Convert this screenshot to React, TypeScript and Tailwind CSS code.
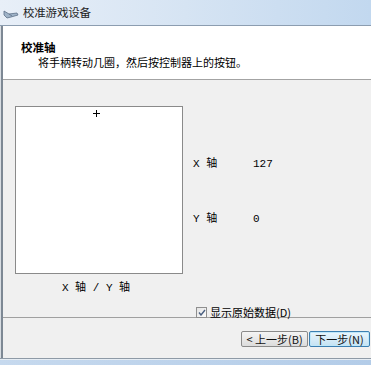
import React from "react";

const cjk = { fontFamily: '"Noto Sans CJK SC", "Liberation Sans", sans-serif' };
const mono = { fontFamily: '"Liberation Mono", "Noto Sans CJK SC", monospace' };

function Btn({ children, primary }: { children: React.ReactNode; primary?: boolean }) {
  return (
    <div
      className={
        primary
          ? "h-[16px] w-[61px] rounded-[2px] border border-[#3c7fb1] bg-gradient-to-b from-[#eaf6fd] to-[#c4e2f3] flex items-center justify-center text-[11px] leading-none text-[#111] shadow-[inset_0_0_0_1px_#bfe7f9] whitespace-pre"
          : "h-[16px] w-[67px] rounded-[2px] border border-[#8a8a8a] bg-gradient-to-b from-[#f4f4f4] to-[#dcdcdc] flex items-center justify-center text-[11px] leading-none text-[#111] whitespace-pre"
      }
      style={cjk}
    >
      {children}
    </div>
  );
}

export default function App() {
  return (
    <div className="w-[371px] h-[365px] overflow-hidden flex flex-col bg-[#f0f0f0]" style={cjk}>
      {/* title bar */}
      <div className="h-[26px] shrink-0 flex items-center gap-[4px] pl-[3px] bg-gradient-to-r from-[#e8eff8] via-[#d6e4f3] to-[#c2d8ef] border-b border-[#8c9db0]">
        <svg width="16" height="10" viewBox="0 0 16 10" className="mt-[2px]">
          <path d="M1 2 L6 5 L14 4 L15 6 L8 8 L4 9 L1 6 Z" fill="#9fb3c8" stroke="#5d7088" strokeWidth="0.8" />
          <path d="M6 5 L9 7" stroke="#5d7088" strokeWidth="0.8" />
        </svg>
        <span className="text-[11.5px] leading-none text-[#1e1e1e] tracking-[-0.2px]">校准游戏设备</span>
      </div>

      <div className="flex-1 flex">
        <div className="w-[1px] bg-[#d8dde2]" />
        <div className="w-[2px] bg-[#7d8894]" />
        <div className="flex-1 flex flex-col">
          {/* header */}
          <div className="h-[54px] shrink-0 bg-white border-b border-[#a3a3a3] pl-[18px] pt-[14px]">
            <div className="text-[11.5px] leading-[14px] font-bold text-black">校准轴</div>
            <div className="text-[11px] leading-[14px] text-black pl-[17px] mt-[1px]">
              将手柄转动几圈，然后按控制器上的按钮。
            </div>
          </div>

          {/* body */}
          <div className="h-[238px] shrink-0 flex flex-col border-b border-[#a0a0a0]">
            <div className="flex">
              <div className="pl-[12px] pt-[26px] flex flex-col items-center">
                <div className="relative w-[168px] h-[168px] bg-white border border-[#8a8a8a]">
                  <div className="absolute left-[77px] top-[3px] w-[7px] h-[7px]">
                    <div className="absolute left-[3px] top-0 w-[1px] h-[7px] bg-black" />
                    <div className="absolute left-0 top-[3px] w-[7px] h-[1px] bg-black" />
                  </div>
                </div>
                <div className="mt-[7px] -ml-[6px] text-[11px] leading-[14px] text-black whitespace-pre" style={mono}>
                  X 轴 / Y 轴
                </div>
              </div>
              <div className="ml-[10px] pt-[77px] flex flex-col gap-[41px]">
                <div className="flex text-[11px] leading-[14px] text-black" style={mono}>
                  <span className="w-[60px] whitespace-pre">X 轴</span>
                  <span>127</span>
                </div>
                <div className="flex text-[11px] leading-[14px] text-black" style={mono}>
                  <span className="w-[60px] whitespace-pre">Y 轴</span>
                  <span>0</span>
                </div>
              </div>
            </div>
            <div className="pl-[193px] mt-[10px] flex items-center gap-[3px]">
              <div className="w-[11px] h-[11px] border border-[#8f8f8f] bg-gradient-to-br from-[#e4e4e4] to-[#fbfbfb] flex items-center justify-center">
                <svg width="8" height="7" viewBox="0 0 8 7">
                  <path d="M1 3.5 L3 6 L7 1" fill="none" stroke="#4a5f80" strokeWidth="1.4" />
                </svg>
              </div>
              <span className="text-[11px] leading-[14px] text-black">显示原始数据(D)</span>
            </div>
          </div>

          {/* buttons */}
          <div className="h-[38px] shrink-0 flex justify-end items-start pt-[13px] pr-[1px] gap-[1px]">
            <Btn>{"< 上一步(B)"}</Btn>
            <Btn primary>下一步(N)</Btn>
          </div>
        </div>
      </div>
      <div className="h-[1px] shrink-0 bg-[#8e9aa6]" />
      <div className="h-[1px] shrink-0 bg-[#e6edf4]" />
      <div className="h-[5px] shrink-0 bg-gradient-to-r from-[#c6d9ee] to-[#b3cce8]" />
    </div>
  );
}
